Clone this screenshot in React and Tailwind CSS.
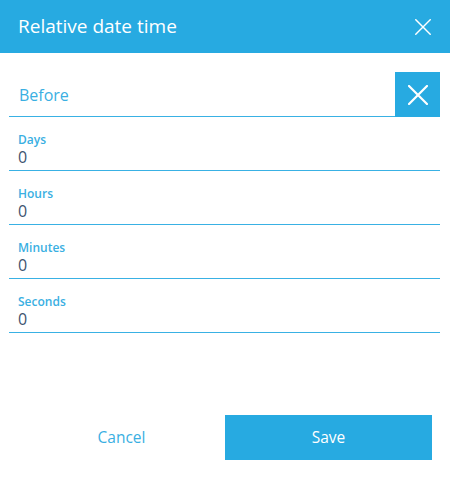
import React from "react";

const XIcon = ({ size, stroke }) => (
  <svg width={size} height={size} viewBox="0 0 20 20" fill="none">
    <path d="M1 1 L19 19 M19 1 L1 19" stroke="white" strokeWidth={stroke} strokeLinecap="square" />
  </svg>
);

const Field = ({ label }) => (
  <div className="flex flex-col justify-end border-b border-[#39b1e4] pl-[9px] pb-[3px] h-[54px]">
    <span className="text-[12px] font-semibold leading-[14px] text-[#3aafe2]">{label}</span>
    <span className="text-[16px] leading-[20px] text-[#3d5470]">0</span>
  </div>
);

export default function App() {
  return (
    <div className="w-[450px] h-[477px] bg-white flex flex-col" style={{ fontFamily: '"Open Sans", "Noto Sans", sans-serif' }}>
      <div className="h-[53px] bg-[#27aae1] flex items-center justify-between pl-[18px] pr-[19px]">
        <span className="text-[19px] text-white leading-none">Relative date time</span>
        <XIcon size={16} stroke={1.8} />
      </div>
      <div className="flex flex-col pl-[9px] pr-[10px]">
        <div className="flex items-end mt-[19px] h-[45px]">
          <div className="flex-1 h-[45px] border-b border-[#39b1e4] flex items-center pl-[10px]">
            <span className="text-[16px] text-[#3aafe2] mt-[1px]">Before</span>
          </div>
          <div className="w-[45px] h-[45px] bg-[#27aae1] flex items-center justify-center">
            <XIcon size={20} stroke={2.2} />
          </div>
        </div>
        <Field label="Days" />
        <Field label="Hours" />
        <Field label="Minutes" />
        <Field label="Seconds" />
      </div>
      <div className="flex mt-[82px] px-[18px]">
        <button className="w-[207px] h-[45px] text-[15.5px] text-[#3aafe2] bg-white">Cancel</button>
        <button className="w-[207px] h-[45px] text-[15.5px] text-white bg-[#27aae1]">Save</button>
      </div>
    </div>
  );
}
